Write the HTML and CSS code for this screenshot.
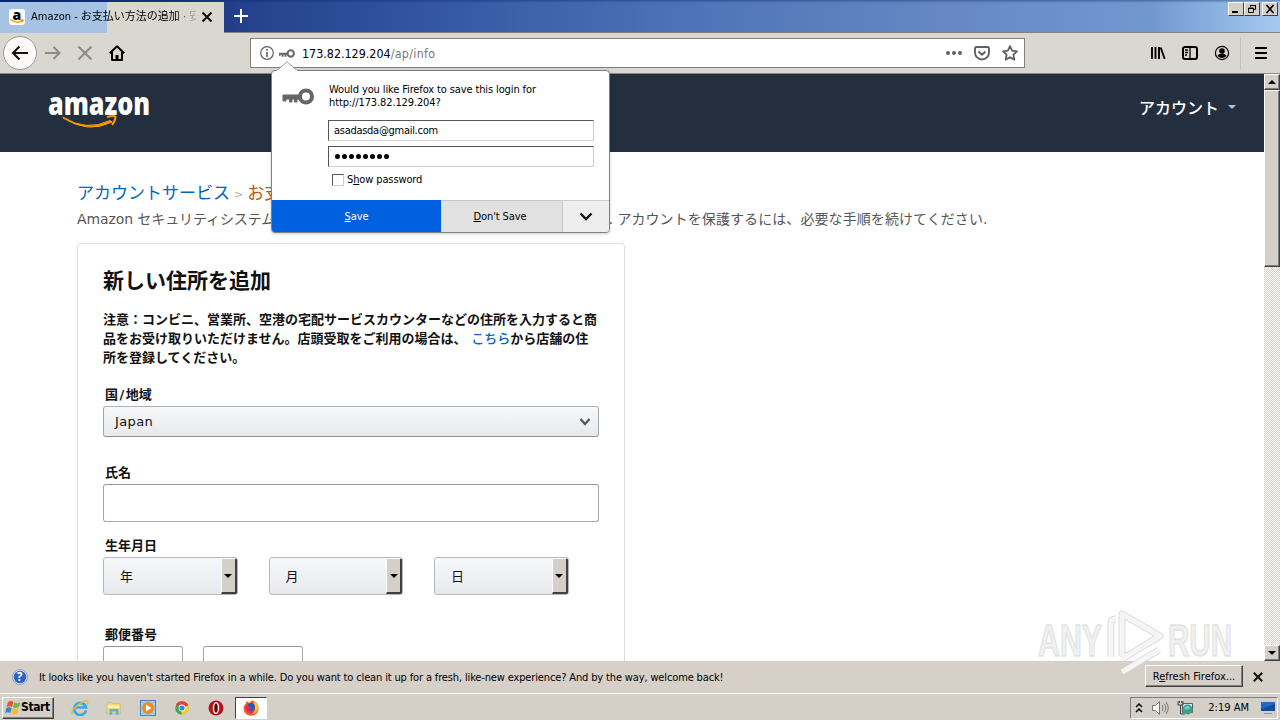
FILE: index.html
```html
<!DOCTYPE html>
<html lang="ja">
<head>
<meta charset="utf-8">
<title>Amazon</title>
<link rel="stylesheet" href="styles.css">
</head>
<body>
<div class="screen">
  <div class="tabbar">
    <div class="tab">
      <svg class="favicon" viewBox="0 0 16 16" width="16" height="16"><rect width="16" height="16" rx="3" fill="#fff"/><text x="3.6" y="10.5" font-family="Open Sans, sans-serif" font-weight="800" font-size="14">a</text><path d="M1.5 10.5Q8 15.5 13.5 11.5M11.5 11h2.5l-.7 2.3" fill="none" stroke="#f90" stroke-width="1.4"/></svg>
      <span class="tab-title">Amazon - お支払い方法の追加 · 安</span>
      <svg class="tab-close" viewBox="0 0 12 12" width="12" height="12"><path d="M1.5 1.5l9 9M10.5 1.5l-9 9" stroke="#111" stroke-width="2"/></svg>
    </div>
    <svg class="new-tab" viewBox="0 0 14 14" width="14" height="14"><path d="M7 0v14M0 7h14" stroke="#fff" stroke-width="2"/></svg>
    <div class="window-buttons">
      <span class="winbtn"><svg width="12" height="10"><path d="M2 8h6" stroke="#000" stroke-width="2"/></svg></span>
      <span class="winbtn"><svg width="12" height="10"><path d="M4.500 3V1.500h5v4H8M2.500 4h5v4.500h-5zM2 4.500h6M4 1.500h6" fill="none" stroke="#000"/></svg></span>
      <span class="winbtn gap"><svg width="12" height="10"><path d="M2.500 1l7 8M9.500 1l-7 8" stroke="#000" stroke-width="1.700"/></svg></span>
    </div>
  </div>

  <div class="toolbar">
    <div class="nav">
      <span class="back"><svg width="18" height="16" viewBox="0 0 18 16"><path d="M17 8H2M8.500 1.500L2 8l6.500 6.500" fill="none" stroke="#111" stroke-width="2.100"/></svg></span>
      <svg class="fwd" width="16" height="14" viewBox="0 0 16 14"><path d="M0 7h14M8.500 1L14.500 7l-6 6" fill="none" stroke="#8d8a86" stroke-width="2"/></svg>
      <svg class="stop" width="14" height="14" viewBox="0 0 14 14"><path d="M.5.5l13 13M13.500.5l-13 13" stroke="#8d8a86" stroke-width="2"/></svg>
      <svg class="home" width="16" height="16" viewBox="0 0 16 16"><path d="M.8 8.200L8 1.200l7.200 7M3 7v8h10V7" fill="none" stroke="#000" stroke-width="2" stroke-linejoin="round"/><path d="M6.500 15v-5h3v5z"/></svg>
    </div>
    <div class="urlbar">
      <svg width="14" height="14" viewBox="0 0 14 14"><circle cx="7" cy="7" r="6.300" fill="none" stroke="#606060" stroke-width="1.200"/><path d="M7 6v5M7 3v1.700" stroke="#606060" stroke-width="1.600"/></svg>
      <svg class="small-key" width="16" height="9" viewBox="0 0 32 17"><path d="M0 7h17v4h-2v4h-4v-4H9v4H5v-4H3v2H0z" fill="#666"/><circle cx="23.500" cy="8.500" r="6.300" fill="none" stroke="#666" stroke-width="4"/></svg>
      <span class="url">173.82.129.204<span class="path">/ap/info</span></span>
      <svg class="dots" width="16" height="4"><circle cx="2" cy="2" r="2"/><circle cx="8" cy="2" r="2"/><circle cx="14" cy="2" r="2"/></svg>
      <svg width="16" height="15" viewBox="0 0 16 15"><path d="M2.500 1h11Q15 1 15 2.500V6.500a7 7 0 0 1-14 0V2.500Q1 1 2.500 1zM4.500 5.500L8 8.800l3.500-3.300" fill="none" stroke="#606060" stroke-width="1.900"/></svg>
      <svg width="16" height="16" viewBox="0 0 16 16"><path d="M8 1.200l2.100 4.500 4.900.6-3.600 3.400.9 4.900L8 12.200l-4.300 2.400.9-4.900L1 6.300l4.900-.6z" fill="none" stroke="#606060" stroke-width="1.800" stroke-linejoin="round"/></svg>
    </div>
    <div class="tools">
      <svg width="16" height="16" viewBox="0 0 16 16"><path d="M2 2v12M5.500 2v12M9 2v12M10.700 2.500l4 11.500" stroke="#000" stroke-width="1.900"/></svg>
      <svg width="16" height="14" viewBox="0 0 16 14"><rect x="1" y="1" width="14" height="12" rx="2" fill="none" stroke="#000" stroke-width="2"/><path d="M8 1v12M3 4h3M3 6.500h3M3 9h2" stroke="#000" stroke-width="1.300"/></svg>
      <svg width="16" height="16" viewBox="0 0 16 16"><circle cx="8" cy="8" r="6.600" fill="none" stroke="#000" stroke-width="1.200"/><circle cx="8" cy="6" r="2.800"/><path d="M3.500 11q1-2.500 4.500-2.500t4.500 2.500Q8 15 3.500 11z"/></svg>
      <span class="divider"></span>
      <svg class="menu" width="12" height="12"><path d="M0 1h12M0 6h12M0 11h12" stroke="#000" stroke-width="2"/></svg>
    </div>
  </div>

  <div class="viewport">
    <div class="page">
      <header class="site-header">
        <svg class="logo" width="104" height="40" viewBox="0 0 104 40"><text x="0" y="25" textLength="102" lengthAdjust="spacingAndGlyphs" font-family="Open Sans, sans-serif" font-weight="800" font-size="32" fill="#fff">amazon</text><path d="M15 27Q38 42 62 30.500L64 32Q40 44 15 28z" fill="#f90" stroke="#f90"/><path d="M59 27q7-2 8.500-.2 0 4-3.500 8.200" fill="none" stroke="#f90" stroke-width="2"/></svg>
        <span class="account">アカウント<i class="caret"></i></span>
      </header>
      <main class="main">
        <div class="crumbs"><a>アカウントサービス</a><span class="sep">&gt;</span><b>お支払い方法の追加</b></div>
        <p class="lead"><span class="lead-a">Amazon セキュリティシステムが異常を検出したため、一時的に利用を制限しました. </span><span class="lead-b">アカウントを保護するには、必要な手順を続けてください.</span></p>
        <section class="card">
          <h1>新しい住所を追加</h1>
          <p class="note">注意：コンビニ、営業所、空港の宅配サービスカウンターなどの住所を入力すると商<br>品をお受け取りいただけません。店頭受取をご利用の場合は、 <a>こちら</a>から店舗の住<br>所を登録してください。</p>
          <label>国<span class="slash">/</span>地域</label>
          <div class="select country">Japan<svg width="12" height="8" viewBox="0 0 12 8"><path d="M1.500 1L6 6l4.500-5" fill="none" stroke="#555" stroke-width="2.200"/></svg></div>
          <label>氏名</label>
          <div class="input name"></div>
          <label>生年月日</label>
          <div class="birth">
            <div class="select dd">年<span class="ddbtn"></span></div>
            <div class="select dd">月<span class="ddbtn"></span></div>
            <div class="select dd">日<span class="ddbtn"></span></div>
          </div>
          <label>郵便番号</label>
          <div class="postal"><div class="input zip1"></div><div class="input zip2"></div></div>
        </section>
      </main>
    </div>
    <div class="scrollbar"><span class="sbtn up"></span><span class="thumb"></span><span class="track"></span><span class="sbtn down"></span></div>
  </div>

  <div class="notice">
    <svg class="help" width="16" height="16" viewBox="0 0 16 16"><circle cx="8" cy="8" r="7.500" fill="#fff" stroke="#8294bd"/><circle cx="8" cy="8" r="6.300" fill="#2d5fc4"/><text x="4.800" y="12.300" font-family="Open Sans, sans-serif" font-size="12" font-weight="700" fill="#fff">?</text></svg>
    <span class="notice-text">It looks like you haven't started Firefox in a while. Do you want to clean it up for a fresh, like-new experience? And by the way, welcome back!</span>
    <span class="refresh"><span>R<u>e</u>fresh Firefox...</span></span>
    <svg class="notice-close" width="10" height="10" viewBox="0 0 10 10"><path d="M.8.8l8.400 8.400M9.200.8L.8 9.200" stroke="#111" stroke-width="2"/></svg>
  </div>

  <div class="taskbar">
    <div class="start"><svg width="16" height="15" viewBox="0 0 16 15"><path d="M3 2q3-2 5.500 0L7 7Q4.500 5.500 1.500 7z" fill="#e5552b"/><path d="M9.300 2.500q3 1.500 6-.2L14 7q-3 1.500-6 .2z" fill="#72b840"/><path d="M1.300 8Q4 6.500 6.700 8l-1.400 5Q3 11.500.2 13z" fill="#3d7fd0"/><path d="M7.700 8.200q3 1.500 5.800 0l-1.300 5q-3 1.500-6 .2z" fill="#f5bc28"/></svg><b>Start</b></div>
    <div class="launch">
      <svg width="18" height="16" viewBox="0 0 18 16"><path d="M15 10.500A6 6 0 1 1 15 7.500H5" fill="none" stroke="#39a8e4" stroke-width="2.700"/><path d="M1.500 14.500Q-1 11 7 5t9.500-3.500q1 1-.5 3" fill="none" stroke="#e9bd40" stroke-width="1.400"/></svg>
      <svg width="16" height="16" viewBox="0 0 18 16"><path d="M1 3l1-1h5l1 1h8v11H1z" fill="#f2d677" stroke="#c8ad55" stroke-width=".6"/><path d="M2 5h13v3H2z" fill="#fff4b8"/><path d="M4 15.500V9h10v6.500h-3V12H7v3.500z" fill="#5bb2dc"/></svg>
      <svg width="16" height="16" viewBox="0 0 16 16"><rect x=".5" y=".5" width="15" height="15" fill="#9bcdf0" stroke="#4984bd"/><circle cx="8" cy="8" r="6" fill="#f38a1b"/><path d="M6 4.500L11.500 8 6 11.500z" fill="#fff"/></svg>
      <svg width="16" height="16" viewBox="0 0 16 16"><circle cx="8" cy="8" r="6.800" fill="#43a84a"/><path d="M8 8L2 4.500a7 7 0 0 1 12.300 1z" fill="#e34133"/><path d="M8 8l6.400-2.700A7 7 0 0 1 7.500 14.800z" fill="#fbcc2f"/><circle cx="8" cy="8" r="3.400" fill="#fff"/><circle cx="8" cy="8" r="2.600" fill="#3f82ea"/></svg>
      <svg width="16" height="16" viewBox="0 0 16 16"><circle cx="8" cy="8" r="7.500" fill="#b5121b"/><ellipse cx="8" cy="8" rx="2.500" ry="5.300" fill="#5c070c" stroke="#f3e6e6" stroke-width="1.500"/></svg>
      <span class="active"><svg width="16" height="16" viewBox="0 0 16 16"><path d="M3 3l1-2 2 2 3-2.500q5 1 6.300 6A7.300 7.300 0 0 1 8 15.700 7.400 7.400 0 0 1 1 6z" fill="#f95a22"/><path d="M10 1q5 2 5 8-2 5-6 5 4-3 3-7z" fill="#ffc62d"/><circle cx="8" cy="7" r="3.900" fill="#2858b9"/><path d="M2 6q4-1 6 2l-3 1.500q3 3 7 0-1 4-5 4Q2 12 2 6z" fill="#ee2c45"/></svg></span>
    </div>
    <div class="tray">
      <svg width="8" height="10" viewBox="0 0 8 10"><path d="M1 4l3-3 3 3M1 9l3-3 3 3" fill="none" stroke="#000" stroke-width="1.500"/></svg>
      <svg class="sound" width="17" height="14" viewBox="0 0 17 14"><path d="M.5 4.500h3l4-4v13l-4-4h-3z" fill="#f5f5f5" stroke="#777"/><path d="M10 4q2 3 0 6M12 2.500q3.500 4.500 0 9M14 1q4.500 6 0 12" fill="none" stroke="#777"/></svg>
      <svg class="net" width="17" height="16" viewBox="0 0 17 16"><path d="M5.500 3.500h10v9h-10z" fill="#d6eef0" stroke="#55605f"/><path d="M1 1v4h5V1M2.500 1v2M4.500 1v2M3.500 5v9H8" fill="none" stroke="#444"/><circle cx="10.500" cy="9.500" r="5" fill="#3b9f8e"/><path d="M7 8q4-4 6 0-3 3-6 0z" fill="#7ccfba"/></svg>
      <span class="clock">2:19 AM</span>
      <svg class="desk" width="16" height="13" viewBox="0 0 16 13"><rect x=".5" y=".5" width="15" height="10" fill="#2469c8" stroke="#bcd0e8"/><path d="M1 8L15 3v7H1z" fill="#164b9c"/><path d="M4 12.500h8" stroke="#8594a5"/></svg>
    </div>
  </div>

  <div class="popup">
    <svg class="arrow" width="20" height="10" viewBox="0 0 20 10"><path d="M0 9.500L10 .7l10 8.800" fill="#fff" stroke="#999"/><path d="M0 9.500h20" stroke="#fff"/></svg>
    <div class="popup-body">
      <svg class="key" width="32" height="17" viewBox="0 0 32 17"><path d="M1 7h17v4h-3v3h-2.500v-3h-2.500v3H7.500v-3H4v2H1z" fill="#666" stroke="#666" stroke-linejoin="round"/><circle cx="24" cy="8.500" r="6" fill="none" stroke="#666" stroke-width="4"/></svg>
      <div class="form">
        <p>Would you like Firefox to save this login for<br>http://173.82.129.204?</p>
        <div class="field mail">asadasda@gmail.com</div>
        <div class="field pw"><i></i><i></i><i></i><i></i><i></i><i></i><i></i><i></i></div>
        <div class="show"><span class="check"></span><span>S<u>h</u>ow password</span></div>
      </div>
    </div>
    <div class="actions"><span class="save"><span><u>S</u>ave</span></span><span class="dont"><span><u>D</u>on't Save</span></span><span class="more"><svg width="14" height="9" viewBox="0 0 14 9"><path d="M1.500 1.500L7 7l5.500-5.500" fill="none" stroke="#111" stroke-width="2.300"/></svg></span></div>
  </div>

  <svg class="watermark" width="200" height="70" viewBox="0 0 200 70"><g fill="#ededed" fill-opacity=".8" stroke="#dedede" stroke-opacity=".8" stroke-width="1.500" font-family="Liberation Sans, Arial, sans-serif" font-weight="700" font-size="45"><text x="1" y="50" textLength="64" lengthAdjust="spacingAndGlyphs">ANY</text><text x="131" y="50" textLength="64" lengthAdjust="spacingAndGlyphs">RUN</text></g><g fill="none" stroke-linejoin="round"><path d="M74 51V16q0-3 5-3M85 50V8l38 22-38 23M85 66l37-22" stroke="#d2d2d2" stroke-opacity=".8" stroke-width="7"/><path d="M74 51V16q0-3 5-3M85 50V8l38 22-38 23M85 66l37-22" stroke="#f5f5f5" stroke-width="5"/></g></svg>
</div>
</body>
</html>
```

FILE: styles.css
```css
* { box-sizing: border-box; }
body { margin: 0; background: #fff; }
svg { display: block; flex: none; }
p, h1 { margin: 0; }
.screen {
  width: 1280px; height: 720px; position: relative; overflow: hidden;
  display: flex; flex-direction: column;
  font: 11px/13px "DejaVu Sans Condensed", "Noto Sans CJK JP", sans-serif;
  color: #000; white-space: nowrap;
}

.tabbar {
  height: 33px; flex: none; display: flex; padding-top: 2px;
  border-bottom: 1px solid #83817e;
  background: linear-gradient(#08246a66, #08246a00 3px), linear-gradient(90deg, #0a246a, #233f8b 18%, #3558a5 35%, #4f75b8 55%, #6687c3 74%, #7298d0 90%, #a6caf0);
}
.tab {
  width: 224px; height: 31px; flex: none; display: flex; align-items: center;
  padding: 0 12px 2px 9px; gap: 6px;
  background: linear-gradient(90deg, #a6c3e4 107px, #dad7d1 107px);
}
.tab-title {
  width: 165px; flex: none; overflow: hidden; line-height: 16px;
  -webkit-mask-image: linear-gradient(90deg, #000 145px, transparent 168px);
}
.new-tab { margin: 7px 0 0 10px; }
.tab-close { margin-left: -1px; }
.window-buttons { margin-left: auto; display: flex; padding-right: 2px; }
.winbtn {
  width: 16px; height: 14px; padding: 1px; background: #d4d0c8;
  border: 1px solid; border-color: #fff #404040 #404040 #fff;
}
.winbtn.gap { margin-left: 2px; }

.toolbar {
  height: 41px; flex: none; display: flex; align-items: center;
  background: #dad7d1; border-bottom: 1px solid #8b8985;
}
.nav { width: 250px; flex: none; display: flex; align-items: center; padding-left: 3px; }
.back {
  width: 34px; height: 34px; border-radius: 50%; background: #faf9f8;
  border: 1px solid #9d9a95; display: grid; place-items: center;
}
.fwd { margin-left: 8px; }
.stop { margin-left: 17px; }
.home { margin-left: 17px; }
.urlbar {
  width: 775px; height: 30px; display: flex; align-items: center; gap: 12px;
  padding: 0 6px 0 9px; background: #fff; border: 1px solid #827f7b;
}
.small-key { margin-left: -7px; }
.url { margin-left: -5px; margin-right: auto; font-size: 12.4px; }
.path { color: #777; letter-spacing: .3px; }
.dots { fill: #606060; }
.tools { display: flex; align-items: center; gap: 16px; margin-left: 125px; }
.divider { width: 1px; height: 32px; background: #c2beb8; margin: 0 -4px 0 -6px; }
.menu { margin-left: 2px; }

.viewport { height: 587px; flex: none; display: flex; overflow: hidden; }
.page { width: 1264px; flex: none; overflow: hidden; background: #fff; }
.site-header {
  height: 78px; background: #232f3e; display: flex; justify-content: space-between;
  align-items: flex-start; padding: 16px 28px 0 48px;
}
.account {
  display: flex; align-items: center; gap: 9px; margin-top: 8px;
  color: #fff; font: 500 16px/18px "Noto Sans CJK JP", sans-serif;
}
.caret { border: 4px solid transparent; border-top-color: #b7bdc5; border-bottom: 0; }
.main { padding: 30px 0 0 77px; font-family: "DejaVu Sans", "Noto Sans CJK JP", sans-serif; }
.crumbs { height: 24px; font-size: 17px; line-height: 22px; display: flex; font-weight: 400; }
.crumbs a, .note a { color: #0066c0; }
.crumbs .sep { color: #aaa; font-size: 11px; line-height: 26px; margin: 0 4px; }
.crumbs b { color: #c45500; font-weight: 400; }
.lead { font-size: 14px; line-height: 26px; height: 37px; color: #555; }
.lead-a { letter-spacing: -.1px; }
.lead-b { letter-spacing: .08px; }
.card {
  width: 548px; height: 600px; border: 1px solid #ddd; border-radius: 4px;
  padding: 24px 25px 0; display: flex; flex-direction: column;
}
h1 { font-size: 21px; line-height: 26px; color: #111; }
.note { margin-top: 16px; font-size: 13px; line-height: 19px; font-weight: 700; color: #111; height: 66px; }
.note a { font-weight: 500; }
.card label { font-size: 13px; font-weight: 700; line-height: 19px; padding-left: 2px; height: 21px; flex: none; color: #111; margin-top: 8px; }
.slash { margin: 0 1.5px; }
.select {
  border: 1px solid; border-color: #adb1b8 #a2a6ac #8d9096; border-radius: 3px;
  background: linear-gradient(#f7f8fa, #e7e9ec); color: #111; font-size: 13px;
  display: flex; align-items: center;
}
.country { height: 31px; flex: none; padding: 0 7px 0 11px; justify-content: space-between; margin-bottom: 18px; letter-spacing: .4px; }
.note + label { margin-top: 9px; }
.input { border: 1px solid #a6a6a6; border-top-color: #949494; border-radius: 3px; background: #fff; }
.name { height: 38px; flex: none; margin-bottom: 6px; }
.birth { display: flex; gap: 31px; margin-bottom: 22px; }
.dd { width: 134.5px; height: 38px; padding-left: 16px; justify-content: space-between; border-color: #b5b9be; overflow: hidden; }
.ddbtn {
  width: 16px; height: 36px; display: grid; place-items: center; background: #d4d0c8;
  border: solid; border-width: 1px 2px 2px 1px; border-color: #fff #404040 #404040 #fff;
}
.ddbtn::before, .sbtn::before { content: ""; border: 4px solid transparent; border-top-color: #000; border-bottom: 0; }
.postal { display: flex; gap: 20px; }
.zip1 { width: 80px; height: 38px; }
.zip2 { width: 100px; height: 38px; }

.scrollbar {
  width: 16px; display: flex; flex-direction: column;
  background: repeating-conic-gradient(#d4d0c8 0 25%, #fff 0 50%) 0 0 / 2px 2px;
}
.sbtn, .thumb {
  background: #d4d0c8; border: 1px solid; border-color: #fff #404040 #404040 #fff;
  box-shadow: inset -1px -1px #808080;
}
.sbtn { height: 16px; flex: none; display: grid; place-items: center; }
.up::before { border: 4px solid transparent; border-top: 0; border-bottom-color: #000; }
.thumb { height: 177px; flex: none; }
.track { flex: 1; }

.notice {
  height: 32px; flex: none; background: #d6d0c8; display: flex; align-items: center;
  padding: 0 17px 0 12px;
}
.notice-text { margin-left: 11px; margin-right: auto; letter-spacing: -.143px; }
.refresh {
  width: 98px; height: 22px; display: grid; place-items: center; margin: -2px 10px 0 0;
  border: 1px solid; border-color: #fff #404040 #404040 #fff; box-shadow: inset -1px -1px #808080;
}

.taskbar {
  height: 27px; flex: none; display: flex; align-items: center; background: #d4d0c8;
  border-top: 1px solid #fff; padding: 1px 2px 0;
}
.start {
  width: 52px; height: 22px; display: flex; align-items: center; padding-left: 2px; gap: 0;
  border: 1px solid; border-color: #fff #404040 #404040 #fff; box-shadow: inset -1px -1px #808080;
}
.start b { font-size: 12px; letter-spacing: -.4px; }
.launch { display: flex; align-items: center; gap: 18px; margin-left: 17px; }
.launch > svg:first-child { margin-right: -1px; }
.active {
  width: 32px; height: 22px; background: #fff; display: grid; place-items: center;
  border: 1px solid; border-color: #404040 #fff #fff #404040; margin-left: -7px;
}
.tray {
  width: 148px; height: 22px; margin-left: auto; display: flex; align-items: center; padding: 0 1px 0 4px;
  border: 1px solid; border-color: #808080 #fff #fff #808080;
}
.sound { margin-left: 9px; }
.net { margin-left: 8px; }
.clock { margin-left: auto; }
.desk { margin-left: 11px; }

.popup {
  position: absolute; left: 271px; top: 70px; width: 339px; height: 163px;
  border: 1px solid #808080; border-radius: 4px; background: #fff;
  box-shadow: 0 1px 3px #0003; display: flex; flex-direction: column;
  letter-spacing: -.12px;
}
.arrow { position: absolute; left: 5px; top: -10px; }
.popup-body { height: 129px; flex: none; display: flex; padding: 12px 15px 0 10px; }
.key { margin-top: 5px; }
.form { flex: 1; margin-left: 14px; }
.form p { padding-left: 1px; height: 37px; }
.field {
  height: 21px; margin-bottom: 5px; padding: 0 5px; display: flex; align-items: center;
  border: 1px solid; border-color: #555 #d0d0d0 #d0d0d0 #555; background: #fff;
}
.mail { letter-spacing: -.28px; }
.pw { gap: 2px; margin-bottom: 0; padding-left: 6px; }
.pw i { width: 5px; height: 5px; border-radius: 50%; background: #000; }
.show { display: flex; align-items: center; gap: 3px; padding-left: 4px; margin-top: 6px; }
.check { width: 12px; height: 12px; border: 1px solid; border-color: #555 #ccc #ccc #555; }
.actions { height: 32px; display: grid; grid-template-columns: 169px 122px 1fr; border-radius: 0 0 3px 3px; overflow: hidden; }
.actions > span { display: grid; place-items: center; }
.save { background: #0060df; color: #fff; }
.dont { background: #e1e1e1; border: solid #c8c8c8; border-width: 1px 1px 0 0; padding-right: 3px; }
.more { background: #eee; border-top: 1px solid #ccc; }
.watermark { position: absolute; left: 1037px; top: 606px; }
```
